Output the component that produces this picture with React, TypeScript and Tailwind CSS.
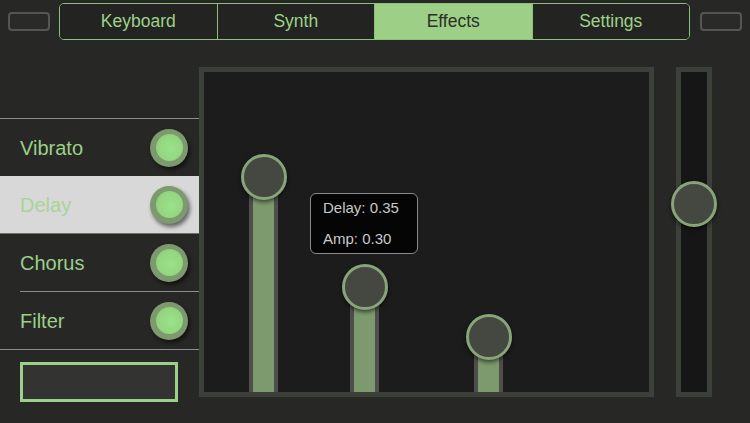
const font = "font-['Liberation_Sans','Helvetica',sans-serif]";

const tabs = ["Keyboard", "Synth", "Effects", "Settings"];

const effects = [
  { name: "Vibrato", line: "" },
  { name: "Delay", line: "border-b border-[#6f706e]" },
  { name: "Chorus", line: "" },
  { name: "Filter", line: "border-b border-[#8c8d8b]" },
];

function Toggle() {
  return (
    <div className="flex h-[38px] w-[38px] items-center justify-center rounded-full bg-[#7d9a6e] shadow-[2px_3px_4px_rgba(0,0,0,0.55)]">
      <div className="h-[27px] w-[27px] rounded-full bg-[radial-gradient(circle_at_55%_55%,#9be28a_0%,#93d67f_60%,#86c472_100%)]" />
    </div>
  );
}

function Knob() {
  return (
    <div className="absolute left-1/2 top-[-23px] h-[46px] w-[46px] -translate-x-1/2 rounded-full border-[3px] border-[#88a57a] bg-[#444840] shadow-[0_2px_4px_rgba(0,0,0,0.6)]" />
  );
}

function Track({ height, className }: { height: number; className?: string }) {
  return (
    <div className={"relative w-[29px] bg-[#4e4f4d] px-[4px] " + (className ?? "")} style={{ height }}>
      <div className="h-full w-full bg-[#7c9a6d]" />
      <Knob />
    </div>
  );
}

export default function App() {
  return (
    <div className={"h-[423px] w-[750px] overflow-hidden bg-[#272825] " + font}>
      {/* header */}
      <div className="flex h-[41px] items-center pt-[1px]">
        <div className="ml-[8px] h-[19px] w-[42px] rounded-[4px] border-2 border-[#555654] bg-[#2a2b29]" />
        <div className="ml-[9px] flex h-[37px] w-[631px] overflow-hidden rounded-[5px] border border-[#8dc07d]">
          {tabs.map((t, i) => (
            <div
              key={t}
              className={
                "flex flex-1 items-center justify-center text-[17.5px] " +
                (i > 0 ? "border-l border-[#8dc07d] " : "") +
                (t === "Effects" ? "bg-[#9dd086] text-[#2c2f2a]" : "bg-[#232421] text-[#9dd189]")
              }
            >
              {t}
            </div>
          ))}
        </div>
        <div className="ml-[10px] h-[19px] w-[42px] rounded-[4px] border-2 border-[#555654] bg-[#2a2b29]" />
      </div>

      {/* body */}
      <div className="mt-[26px] flex">
        {/* left column */}
        <div className="w-[199px] pt-[51px]">
          <div className="border-t border-[#8c8d8b]">
            {effects.map((e) => (
              <div key={e.name} className={e.line}>
                <div
                  className={
                    "flex h-[57px] items-center justify-between pl-[20px] pr-[11px] " +
                    (e.name === "Delay" ? "bg-[#d8d8d8] text-[#a6d595]" : "text-[#9ccf89]")
                  }
                >
                  <span className="text-[20px]">{e.name}</span>
                  <Toggle />
                </div>
                {e.name === "Chorus" && <div className="ml-[20px] h-px bg-[#8c8d8b]" />}
              </div>
            ))}
          </div>
          <div className="ml-[20px] mt-[12px] h-[40px] w-[158px] border-[3px] border-[#9ccf89] bg-[#333432]" />
        </div>

        {/* main panel */}
        <div className="h-[330px] w-[455px] border-[5px] border-[#3b4038] bg-[#1c1c1c]">
          <div className="relative flex h-full items-end">
            <Track height={215} className="ml-[45px]" />
            <Track height={105} className="ml-[72px]" />
            <Track height={55} className="ml-[95px]" />
            <div className="absolute left-[106px] top-[121px] flex h-[61px] w-[108px] flex-col justify-center gap-[9px] rounded-[6px] border border-[#8a8a8a] bg-[#050505] pl-[12px] text-[15px] text-[#c9c9c9]">
              <div>Delay: 0.35</div>
              <div>Amp: 0.30</div>
            </div>
          </div>
        </div>

        {/* right slider */}
        <div className="relative ml-[22px] h-[330px] w-[36px] border-[5px] border-[#3b4038] bg-[#161616]">
          <div className="absolute left-1/2 top-[109px] h-[46px] w-[46px] -translate-x-1/2 rounded-full border-[3px] border-[#88a57a] bg-[#444840] shadow-[0_2px_4px_rgba(0,0,0,0.6)]" />
        </div>
      </div>
    </div>
  );
}
